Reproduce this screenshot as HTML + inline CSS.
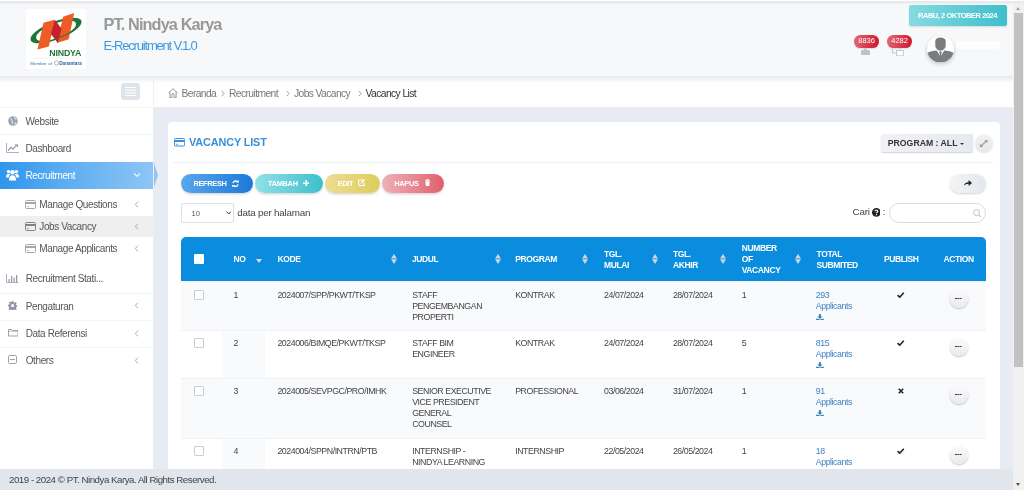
<!DOCTYPE html>
<html><head><meta charset="utf-8">
<style>
*{margin:0;padding:0;box-sizing:border-box}
html,body{width:1024px;height:490px;overflow:hidden}
body{position:relative;background:#e8ebf3;font-family:"Liberation Sans",sans-serif;color:#555}
.a{position:absolute}
.t{position:absolute;white-space:nowrap;line-height:1}
/* top */
#topline{left:0;top:0;width:1024px;z-index:5;height:4px;background:linear-gradient(#fff 0,#fff 1px,#e6e7ea 1px,#eeeff1 4px)}
#header{left:0;top:4px;width:1013px;height:72px;background:#f7f8fa}
#logo{left:26px;top:9px;width:60px;height:60px;background:#fff}
#sidebar{left:0;top:77px;width:154px;height:392px;background:#fff;border-right:1px solid #eceef2}
#crumb{left:154px;top:77px;width:859px;height:30px;background:#fff}
#card{left:167.5px;top:121.5px;width:832px;height:360px;background:#fff;border-radius:4px 4px 0 0}
#footer{left:0;top:469px;width:1013px;height:21px;background:#e1e5ec}
#sb{left:1013px;top:0;width:11px;height:490px;background:#f1f1f1}
#thumb{left:1014.2px;top:13.2px;width:8.8px;height:353.8px;background:#c1c1c1}
.sep{position:absolute;left:0;width:153px;height:1px;background:#f2f3f5}
.menu{font-size:10px;letter-spacing:-0.39px;color:#555}
.btn{position:absolute;height:19px;border-radius:10px;box-shadow:0 1.5px 2px rgba(0,0,0,.15);color:#fff;font-weight:bold;font-size:7.4px;letter-spacing:-0.3px}
.btn span{position:absolute;top:6px;white-space:nowrap;line-height:1}
#thead{left:181px;top:237px;width:805px;height:43.5px;background:#0a8ddf;border-radius:5px 5px 0 0}
.th{position:absolute;color:#fff;font-weight:bold;font-size:8.5px;letter-spacing:-0.38px;line-height:11.2px;white-space:nowrap}
.td{position:absolute;color:#444;font-size:8.8px;letter-spacing:-0.45px;line-height:11.2px;white-space:nowrap}
.row{position:absolute;left:181px;width:805px}
.cb{position:absolute;left:194px;width:10px;height:10px;border:1px solid #c9ccd1;background:#fff;border-radius:1px}
.sort{position:absolute;width:6px;height:10px}
.sort:before{content:"";position:absolute;left:0;top:0;border-left:2.9px solid transparent;border-right:2.9px solid transparent;border-bottom:4.3px solid #c9d3de}
.sort:after{content:"";position:absolute;left:0;top:5.3px;border-left:2.9px solid transparent;border-right:2.9px solid transparent;border-top:4.3px solid #c9d3de}
.act{position:absolute;left:949.5px;width:18.5px;height:18.5px;border-radius:50%;background:linear-gradient(#fbfbfc,#e9eaec);box-shadow:0 1px 2px rgba(0,0,0,.25)}
.act:after{content:"";position:absolute;left:5.8px;top:8.3px;width:1.7px;height:1.7px;background:#444;box-shadow:2.3px 0 0 #444,4.6px 0 0 #444}
.crumbt{font-size:10.3px;color:#777;letter-spacing:-0.6px}
.lnk{color:#3a78b8}
.chk{position:absolute;left:897px;width:8px;height:6px}
#root{position:absolute;left:0;top:0;width:1024px;height:490px;will-change:transform;overflow:hidden}
</style></head><body><div id="root">
<div class="a" id="topline"></div>
<div class="a" id="header"></div>
<div class="a" id="logo"></div>
<svg class="a" style="left:26px;top:9px" width="60" height="60" viewBox="0 0 60 60">
 <g transform="rotate(-21 30 21.5)">
  <path fill-rule="evenodd" fill="#1d7536" d="M2.8 21.5a27.2 8.9 0 1 0 54.4 0a27.2 8.9 0 1 0 -54.4 0z M8.8 21.8a21.2 7.3 0 1 0 42.4 0a21.2 7.3 0 1 0 -42.4 0z"/>
 </g>
 <path fill="#ee5b24" d="M11.5 40.4L17.5 13.8 28.8 10.8 22.8 37.4z"/>
 <path fill="#ee5b24" d="M30.8 34L37.2 7.8 48.2 3.9 42.7 30.3z"/>
 <path fill="#c8202e" d="M28.8 10.8L35.6 19.8 31.8 34 24.9 25z"/>
 <g transform="rotate(-21 30 21.5)">
  <path fill="none" stroke="#1d7536" stroke-width="0.9" d="M24 29 A23.5 6.9 0 0 0 47 27.4"/>
 </g>
 <text x="23.3" y="46.7" font-family="Liberation Sans" font-weight="bold" font-size="8.8" fill="#1d7536" letter-spacing="-0.18">NINDYA</text>
 <path d="M7 49.2h47" stroke="#e3e6ea" stroke-width=".5"/>
 <text x="4.2" y="55.6" font-family="Liberation Sans" font-size="4.4" fill="#3d6fb6" letter-spacing="0.1">Member of</text>
 <circle cx="30.5" cy="54" r="2.1" fill="none" stroke="#999" stroke-width=".7"/>
 <text x="33.3" y="55.6" font-family="Liberation Sans" font-size="4.6" fill="#2d5ea8" font-weight="bold" letter-spacing="0">Danantara</text>
</svg>
<div class="t" style="left:103.5px;top:15.5px;font-size:16.3px;font-weight:bold;color:#999;letter-spacing:-0.88px">PT. Nindya Karya</div>
<div class="t" style="left:103.5px;top:38.5px;font-size:13px;color:#3b99e0;letter-spacing:-1.2px">E-Recruitment V.1.0</div>


<!-- badges -->
<div class="a" style="left:853.9px;top:35.1px;width:25px;height:12.7px;border-radius:6.4px;background:linear-gradient(100deg,#e26a78,#d0142a);box-shadow:0 1px 1.5px rgba(0,0,0,.12)"></div>
<div class="t" style="left:858.3px;top:37.2px;font-size:7.5px;color:#fff;letter-spacing:-0.05px">8836</div>
<svg class="a" style="left:860.5px;top:47.6px" width="9" height="7.4" viewBox="0 0 9 7.4"><path d="M3 0h3v2H3z" fill="#c5ccd3"/><path d="M1.6 1.9h5.8c.9 0 1.6.8 1.6 1.8v2.4c0 .8-.5 1.3-1.2 1.3H1.2C.5 7.4 0 6.9 0 6.1V3.7c0-1 .7-1.8 1.6-1.8z" fill="#b9c1c9"/></svg>
<div class="a" style="left:887.1px;top:35.1px;width:25px;height:12.7px;border-radius:6.4px;background:linear-gradient(100deg,#e26a78,#d0142a);box-shadow:0 1px 1.5px rgba(0,0,0,.12)"></div>
<div class="t" style="left:891.3px;top:37.2px;font-size:7.5px;color:#fff;letter-spacing:-0.05px">4282</div>
<svg class="a" style="left:891.9px;top:47.6px" width="12" height="8.4" viewBox="0 0 12 8.4"><path d="M.5 .4v4.6h4M8 .4v2.2" stroke="#bcc3ca" stroke-width=".9" fill="none"/><rect x="4.5" y="2.6" width="6.8" height="5.3" fill="#fff" stroke="#bcc3ca" stroke-width=".9"/></svg>
<!-- avatar -->
<div class="a" style="left:927px;top:35.7px;width:27px;height:26.5px;border-radius:50%;background:#fff;box-shadow:0 2px 4px rgba(0,0,0,.22)"></div>
<svg class="a" style="left:927px;top:35.7px" width="27" height="26.5" viewBox="0 0 27 26.5">
 <defs><clipPath id="avc"><ellipse cx="13.5" cy="13.25" rx="13.5" ry="13.25"/></clipPath></defs>
 <g clip-path="url(#avc)" fill="#7b7c7e">
  <path d="M8.3 5.2C8.3 2.6 10.4 1.4 13.5 1.4s5.2 1.2 5.2 3.8v4.4c0 2.6-2.3 5.2-5.2 5.2S8.3 12.2 8.3 9.6z"/>
  <path d="M0 17.2C2.5 15.7 6.3 14.9 9.8 14.6l3.7 6.2 3.7-6.2c3.5.3 7.3 1.1 9.8 2.6V27H0z"/>
  <path d="M12.9 15.2h1.2l.5 1.1-.6 4.5-.5.8-.5-.8-.6-4.5z"/>
 </g>
</svg>
<div class="a" style="left:956.2px;top:41px;width:45px;height:7.8px;border-radius:4px;background:#fdfdfe"></div>

<!-- date badge -->
<div class="a" style="left:908.5px;top:5px;width:98.5px;height:21.2px;background:linear-gradient(90deg,#86dbe1,#3dbfcb);border-radius:2px;box-shadow:0 1px 2px rgba(0,0,0,.12)"></div>
<div class="t" style="left:918px;top:11.7px;font-size:7.5px;font-weight:bold;color:#fff;letter-spacing:-0.46px">RABU, 2 OKTOBER 2024</div>

<div class="a" id="sidebar"></div>
<div class="a" id="crumb"></div>

<!-- sidebar -->
<div class="a" style="left:121px;top:82.6px;width:19px;height:17.8px;background:#dfe3ea;border-radius:3px"></div>
<div class="a" style="left:125px;top:86.9px;width:11px;height:1.1px;background:#fff;box-shadow:0 2.7px 0 #fff,0 5.4px 0 #fff,0 8.1px 0 #fff"></div>
<div class="a" style="left:153px;top:77px;width:1px;height:30px;background:#eef0f3"></div>
<div class="sep" style="top:106.5px"></div>
<div class="sep" style="top:134px"></div>
<div class="sep" style="top:161.5px"></div>
<div class="sep" style="top:292.5px"></div>
<div class="sep" style="top:319.8px"></div>
<div class="sep" style="top:347.2px"></div>
<svg class="a" style="left:7.5px;top:115.5px" width="10" height="10" viewBox="0 0 10 10"><circle cx="5" cy="5" r="4.8" fill="#9ba5b1"/><path d="M2.2 2.3c1 .3 1.6 1 1.4 2 .8.3 1.1 1 .8 1.8-.4.6-.2 1.4.3 1.9M6.5 1c-.2.8.2 1.3.9 1.5.5.2.9.7.8 1.3M8.2 6.5c-.7 0-1.2.5-1.2 1.2v1" stroke="#fff" stroke-width=".9" fill="none"/></svg>
<div class="t menu" style="left:25.5px;top:116.6px">Website</div>
<svg class="a" style="left:6px;top:143px" width="13" height="10" viewBox="0 0 13 10"><path d="M.5 0v9.5H13" stroke="#aab2bd" stroke-width="1" fill="none"/><path d="M2 7.5l3-3.2 2 1.8 3.6-4" stroke="#8f98a4" stroke-width="1.1" fill="none"/><path d="M9 1.8h2.5v2.4" stroke="#8f98a4" stroke-width="1" fill="none"/></svg>
<div class="t menu" style="left:25.5px;top:143.9px">Dashboard</div>
<div class="a" style="left:0;top:162px;width:153px;height:26.5px;background:linear-gradient(90deg,#2f95ee,#5aacf0 40%,#8ec5f6)"></div>
<div class="a" style="left:153.6px;top:162.8px;width:0;height:0;border-top:12.2px solid transparent;border-bottom:12.2px solid transparent;border-left:4.8px solid #90c6f6"></div>
<svg class="a" style="left:6px;top:168.5px" width="13" height="12" viewBox="0 0 13 12"><g fill="#fff"><circle cx="6.5" cy="3.2" r="2.3"/><circle cx="2.5" cy="2.6" r="1.7"/><circle cx="10.5" cy="2.6" r="1.7"/><path d="M3 11.5c0-3.5 1.2-5.2 3.5-5.2S10 8 10 11.5z"/><path d="M0 8.5c0-2.5.8-3.7 2.5-3.7 1 0 1.4.3 1.6.6C3.2 6.3 2.8 7.3 2.7 8.5z"/><path d="M13 8.5c0-2.5-.8-3.7-2.5-3.7-1 0-1.4.3-1.6.6.9.9 1.3 1.9 1.4 3.1z"/></g></svg>
<div class="t menu" style="left:25.5px;top:170.9px;color:#fff">Recruitment</div>
<svg class="a" style="left:132.5px;top:172px" width="8" height="6" viewBox="0 0 8 6"><path d="M1 1.3l3 3 3-3" stroke="#fff" stroke-width="1.1" fill="none"/></svg>
<div class="a" style="left:0;top:215.5px;width:153px;height:21.3px;background:#efefef"></div>
<svg class="a" style="left:25px;top:200px" width="11" height="9" viewBox="0 0 11 9"><rect x=".5" y=".5" width="10" height="8" rx="1" fill="none" stroke="#a2a8af" stroke-width="1"/><rect x=".5" y="2" width="10" height="2" fill="#a2a8af"/><rect x="2" y="6.3" width="2" height=".8" fill="#a2a8af"/></svg><div class="t menu" style="left:39.3px;top:200.0px">Manage Questions</div><svg class="a" style="left:134px;top:200.5px" width="5" height="7" viewBox="0 0 5 7"><path d="M4 .7L1.2 3.5 4 6.3" stroke="#9aa0a7" stroke-width=".9" fill="none"/></svg><svg class="a" style="left:25px;top:221.8px" width="11" height="9" viewBox="0 0 11 9"><rect x=".5" y=".5" width="10" height="8" rx="1" fill="none" stroke="#7d848c" stroke-width="1"/><rect x=".5" y="2" width="10" height="2" fill="#7d848c"/><rect x="2" y="6.3" width="2" height=".8" fill="#7d848c"/></svg><div class="t menu" style="left:39.3px;top:222.2px">Jobs Vacancy</div><svg class="a" style="left:134px;top:222.5px" width="5" height="7" viewBox="0 0 5 7"><path d="M4 .7L1.2 3.5 4 6.3" stroke="#9aa0a7" stroke-width=".9" fill="none"/></svg><svg class="a" style="left:25px;top:244px" width="11" height="9" viewBox="0 0 11 9"><rect x=".5" y=".5" width="10" height="8" rx="1" fill="none" stroke="#a2a8af" stroke-width="1"/><rect x=".5" y="2" width="10" height="2" fill="#a2a8af"/><rect x="2" y="6.3" width="2" height=".8" fill="#a2a8af"/></svg><div class="t menu" style="left:39.3px;top:244.2px">Manage Applicants</div><svg class="a" style="left:134px;top:244.5px" width="5" height="7" viewBox="0 0 5 7"><path d="M4 .7L1.2 3.5 4 6.3" stroke="#9aa0a7" stroke-width=".9" fill="none"/></svg>
<svg class="a" style="left:6px;top:274px" width="12.5" height="9" viewBox="0 0 12.5 9"><path d="M.5 0v8.5h12" stroke="#aab2bd" stroke-width="1" fill="none"/><g fill="#8f98a4"><rect x="2.5" y="5" width="1.2" height="3"/><rect x="5" y="2" width="1.2" height="6"/><rect x="7.5" y="3.5" width="1.2" height="4.5"/><rect x="10" y="1" width="1.2" height="7"/></g></svg>
<div class="t menu" style="left:25.7px;top:274.3px">Recruitment Stati...</div>
<svg class="a" style="left:8px;top:301.2px" width="9.2" height="9.2" viewBox="0 0 10 10"><path fill="#8f98a4" d="M4.2 0h1.6l.3 1.5 1 .5 1.3-.9 1.1 1.1-.9 1.3.5 1 1.4.3v1.6l-1.4.3-.5 1 .9 1.3-1.1 1.1-1.3-.9-1 .5-.3 1.5H4.2l-.3-1.5-1-.5-1.3.9L.5 8.3l.9-1.3-.5-1L0 5.8V4.2l1.4-.3.5-1-.9-1.3L2.1.5l1.3.9 1-.5z"/><circle cx="5" cy="5" r="1.7" fill="#fff"/></svg>
<div class="t menu" style="left:25.7px;top:301.7px">Pengaturan</div>
<svg class="a" style="left:7.5px;top:329px" width="10.5" height="7.5" viewBox="0 0 10.5 7.5"><path d="M.5 .5h3.3l1 1.1h5.2v5.4H.5z" fill="none" stroke="#8f98a4" stroke-width=".9"/><path d="M.5 2.2h9.5" stroke="#8f98a4" stroke-width=".6"/></svg>
<div class="t menu" style="left:25.7px;top:328.9px">Data Referensi</div>
<svg class="a" style="left:8px;top:355px" width="9" height="9" viewBox="0 0 9 9"><rect x=".5" y=".5" width="8" height="8" rx="1.3" fill="none" stroke="#8f98a4" stroke-width=".9"/><path d="M2 4.5h5" stroke="#8f98a4" stroke-width=".9"/></svg>
<div class="t menu" style="left:25.7px;top:355.9px">Others</div>
<svg class="a" style="left:134px;top:302px" width="5" height="7" viewBox="0 0 5 7"><path d="M4 .7L1.2 3.5 4 6.3" stroke="#9aa0a7" stroke-width=".9" fill="none"/></svg><svg class="a" style="left:134px;top:329.5px" width="5" height="7" viewBox="0 0 5 7"><path d="M4 .7L1.2 3.5 4 6.3" stroke="#9aa0a7" stroke-width=".9" fill="none"/></svg><svg class="a" style="left:134px;top:356.5px" width="5" height="7" viewBox="0 0 5 7"><path d="M4 .7L1.2 3.5 4 6.3" stroke="#9aa0a7" stroke-width=".9" fill="none"/></svg>
<div class="a" id="card"></div>

<div class="a" style="left:0;top:76px;width:1013px;height:7px;background:linear-gradient(#e7e8ea,#ededef 25%,#f6f6f7 60%,rgba(255,255,255,0))"></div>
<!-- breadcrumb -->
<svg class="a" style="left:168px;top:87.6px" width="10" height="10.4" viewBox="0 0 10 10.4"><path d="M.6 5L5 .7 9.4 5M1.9 3.8v6h2V6.6a1.1 1.1 0 0 1 2.2 0v3.2h2V3.8" fill="none" stroke="#80858b" stroke-width=".85" stroke-linejoin="round"/></svg>
<div class="t crumbt" style="left:181.5px;top:88.8px">Beranda</div>
<svg class="a" style="left:221px;top:90.3px" width="4" height="7" viewBox="0 0 4 7"><path d="M.7.8l2.5 2.7L.7 6.2" stroke="#888" stroke-width=".8" fill="none"/></svg>
<div class="t crumbt" style="left:229px;top:88.8px">Recruitment</div>
<svg class="a" style="left:286px;top:90.3px" width="4" height="7" viewBox="0 0 4 7"><path d="M.7.8l2.5 2.7L.7 6.2" stroke="#888" stroke-width=".8" fill="none"/></svg>
<div class="t crumbt" style="left:294px;top:88.8px">Jobs Vacancy</div>
<svg class="a" style="left:358px;top:90.3px" width="4" height="7" viewBox="0 0 4 7"><path d="M.7.8l2.5 2.7L.7 6.2" stroke="#888" stroke-width=".8" fill="none"/></svg>
<div class="t crumbt" style="left:365.6px;top:88.8px;color:#333">Vacancy List</div>

<!-- card header -->
<svg class="a" style="left:174px;top:138.2px" width="11.2" height="8.5" viewBox="0 0 11.2 8.5"><rect x=".5" y=".5" width="10.2" height="7.5" rx="1" fill="none" stroke="#3a8fd9" stroke-width="1"/><rect x=".5" y="2" width="10.2" height="2" fill="#3a8fd9"/><rect x="2" y="5.8" width="2.2" height=".8" fill="#3a8fd9"/></svg>
<div class="t" style="left:189px;top:136.9px;font-size:10.9px;font-weight:bold;color:#3a8fd9;letter-spacing:-0.15px">VACANCY LIST</div>
<div class="a" style="left:880.5px;top:133.7px;width:92px;height:18.5px;border-radius:2px;background:linear-gradient(90deg,#eff1f4,#e6e9ee);box-shadow:0 1px 1.5px rgba(0,0,0,.18)"></div>
<div class="t" style="left:887.8px;top:138.5px;font-size:8.7px;font-weight:bold;color:#333;letter-spacing:0">PROGRAM : ALL</div>
<div class="a" style="left:960px;top:143px;width:0;height:0;border-left:2.6px solid transparent;border-right:2.6px solid transparent;border-top:2.6px solid #333"></div>
<div class="a" style="left:974.5px;top:133.7px;width:18.5px;height:18.5px;border-radius:50%;background:linear-gradient(#f1f2f4,#e6e8eb);box-shadow:0 1px 1.5px rgba(0,0,0,.15)"></div>
<svg class="a" style="left:979px;top:138.5px" width="9.5" height="9" viewBox="0 0 9.5 9"><path d="M1.5 7.5l6.5-6" stroke="#9a9ea4" stroke-width="1.1"/><path d="M5.2 1h3.3v3.1z M.9 4.8v3.3h3.4z" fill="#9a9ea4"/></svg>
<div class="a" style="left:173px;top:161.5px;width:820px;height:1px;background:#f0f1f4"></div>

<!-- buttons -->
<div class="btn" style="left:181px;top:174px;width:72px;background:linear-gradient(90deg,#5aa7ec,#1c78d8)"><span style="left:12.4px">REFRESH</span></div>
<svg class="a" style="left:232px;top:179.5px" width="7" height="7.5" viewBox="0 0 7 7.5"><path d="M1 3.2A2.6 2.6 0 0 1 5.6 2M6 4.3A2.6 2.6 0 0 1 1.4 5.5" stroke="#fff" stroke-width="1.3" fill="none"/><path d="M4.2 2.6h2.6V0zM2.8 4.9H.2v2.6z" fill="#fff"/></svg>
<div class="btn" style="left:255px;top:174px;width:67.5px;background:linear-gradient(90deg,#92e0e7,#3dbfcb)"><span style="left:13px">TAMBAH</span></div>
<svg class="a" style="left:302.8px;top:179.5px" width="6.5" height="6.5" viewBox="0 0 6.5 6.5"><path d="M3.25 0v6.5M0 3.25h6.5" stroke="#fff" stroke-width="1.6"/></svg>
<div class="btn" style="left:325px;top:174px;width:54.5px;background:linear-gradient(90deg,#eddd92,#dccd5c)"><span style="left:12.5px">EDIT</span></div>
<svg class="a" style="left:358px;top:179.3px" width="7.5" height="7" viewBox="0 0 7.5 7"><path d="M5 1H.7v5.5h5.5V3.8" stroke="#fff" stroke-width="1" fill="none"/><path d="M2.7 4.6l.3-1.3L6.2.1l1 1L4 4.3z" fill="#fff"/></svg>
<div class="btn" style="left:382px;top:174px;width:62px;background:linear-gradient(90deg,#eeb1b7,#e0606d)"><span style="left:12.3px">HAPUS</span></div>
<svg class="a" style="left:424.7px;top:179.3px" width="5.2" height="7" viewBox="0 0 5.2 7"><path d="M0 .9h5.2v.9H0zM1.6 0h2v1H1.6zM.5 2.2h4.2l-.3 4.8H.8z" fill="#fff"/></svg>

<div class="a" style="left:950.2px;top:174px;width:36.2px;height:19.2px;border-radius:10px;background:linear-gradient(90deg,#f3f4f6,#e4e7ec);box-shadow:0 1px 2px rgba(0,0,0,.18)"></div>
<svg class="a" style="left:964.4px;top:180.3px" width="8" height="6" viewBox="0 0 8 6"><path d="M0 6C.2 3.5 1.8 2.3 4.6 2.3V0L8 3 4.6 6V3.8C2.4 3.8 1 4.5 0 6z" fill="#222"/></svg>

<!-- length + search -->
<div class="a" style="left:181.3px;top:203.1px;width:53px;height:20px;border:1px solid #dcdfe5;border-radius:2px;background:#fff"></div>
<div class="t" style="left:191.6px;top:209.5px;font-size:7.6px;color:#555">10</div>
<svg class="a" style="left:225.5px;top:211.3px" width="5.6" height="4" viewBox="0 0 5.6 4"><path d="M.6.6l2.2 2.4L5 .6" stroke="#333" stroke-width="1" fill="none"/></svg>
<div class="t" style="left:237.2px;top:207.8px;font-size:9.8px;color:#444;letter-spacing:-0.2px">data per halaman</div>
<div class="t" style="left:852.6px;top:207.3px;font-size:9.8px;color:#444;letter-spacing:-0.2px">Cari</div>
<svg class="a" style="left:871.7px;top:207.8px" width="8.8" height="8.8" viewBox="0 0 10 10"><circle cx="5" cy="5" r="5" fill="#222"/><path d="M3.4 3.8C3.4 2.8 4.1 2.3 5 2.3S6.6 2.9 6.6 3.7C6.6 4.8 5.1 4.9 5.1 6" stroke="#fff" stroke-width="1.3" fill="none"/><circle cx="5.1" cy="7.6" r=".75" fill="#fff"/></svg>
<div class="t" style="left:882.8px;top:207.3px;font-size:9.8px;color:#444">:</div>
<div class="a" style="left:889px;top:202.9px;width:97px;height:20.5px;border:1px solid #d6dce5;border-radius:10.25px;background:#fff"></div>
<svg class="a" style="left:973px;top:208.5px" width="8.5" height="8.5" viewBox="0 0 8.5 8.5"><circle cx="3.6" cy="3.6" r="3" fill="none" stroke="#b5bac1" stroke-width=".9"/><path d="M5.8 5.8L8 8" stroke="#b5bac1" stroke-width="1"/></svg>

<!-- table -->
<div class="a" id="thead"></div>
<div class="a" style="left:194.3px;top:254.2px;width:10px;height:10px;background:#fff;border-radius:1px"></div>
<div class="th" style="left:233.4px;top:254.35px">NO</div>
<div class="th" style="left:277.6px;top:254.35px">KODE</div>
<div class="th" style="left:412px;top:254.35px">JUDUL</div>
<div class="th" style="left:515.2px;top:254.35px">PROGRAM</div>
<div class="th" style="left:604px;top:248.65px">TGL.<br>MULAI</div>
<div class="th" style="left:672.9px;top:248.65px">TGL.<br>AKHIR</div>
<div class="th" style="left:741.7px;top:242.85px">NUMBER<br>OF<br>VACANCY</div>
<div class="th" style="left:816.5px;top:248.65px">TOTAL<br>SUBMITED</div>
<div class="th" style="left:883.9px;top:254.35px">PUBLISH</div>
<div class="th" style="left:943.4px;top:254.35px">ACTION</div>
<div class="a" style="left:256.3px;top:259.3px;width:0;height:0;border-left:3px solid transparent;border-right:3px solid transparent;border-top:4.5px solid #d5dfe9"></div>
<svg class="a" style="left:391px;top:254.2px" width="6" height="10" viewBox="0 0 6 10"><path d="M0 4.6L3 0 6 4.6zM0 5.3h6L3 9.9z" fill="#cbd5df"/></svg>
<svg class="a" style="left:495.4px;top:254.2px" width="6" height="10" viewBox="0 0 6 10"><path d="M0 4.6L3 0 6 4.6zM0 5.3h6L3 9.9z" fill="#cbd5df"/></svg>
<svg class="a" style="left:582px;top:254.2px" width="6" height="10" viewBox="0 0 6 10"><path d="M0 4.6L3 0 6 4.6zM0 5.3h6L3 9.9z" fill="#cbd5df"/></svg>
<svg class="a" style="left:651.5px;top:254.2px" width="6" height="10" viewBox="0 0 6 10"><path d="M0 4.6L3 0 6 4.6zM0 5.3h6L3 9.9z" fill="#cbd5df"/></svg>
<svg class="a" style="left:720.3px;top:254.2px" width="6" height="10" viewBox="0 0 6 10"><path d="M0 4.6L3 0 6 4.6zM0 5.3h6L3 9.9z" fill="#cbd5df"/></svg>
<svg class="a" style="left:794.5px;top:254.2px" width="6" height="10" viewBox="0 0 6 10"><path d="M0 4.6L3 0 6 4.6zM0 5.3h6L3 9.9z" fill="#cbd5df"/></svg>
<div class="row" style="top:281px;height:49px;background:#f9fafc"></div>
<div class="a" style="left:181px;top:280.5px;width:805px;height:1px;background:#eef1f5"></div>
<div class="cb" style="top:290.3px"></div>
<div class="td" style="left:233.6px;top:289.65px">1</div>
<div class="td" style="left:277.4px;top:289.65px">2024007/SPP/PKWT/TKSP</div>
<div class="td" style="left:412.2px;top:289.65px">STAFF<br>PENGEMBANGAN<br>PROPERTI</div>
<div class="td" style="left:515.2px;top:289.65px">KONTRAK</div>
<div class="td" style="left:604px;top:289.65px">24/07/2024</div>
<div class="td" style="left:672.9px;top:289.65px">28/07/2024</div>
<div class="td" style="left:741.7px;top:289.65px">1</div>
<div class="td" style="left:815.8px;top:289.65px;color:#4083c4">293<br>Applicants</div>
<svg class="a" style="left:815.8px;top:313.5px" width="7.8" height="6.6" viewBox="0 0 7.8 6.6"><path d="M2.9 0h2v2.6h1.6L3.9 5 1.3 2.6h1.6z" fill="#3d7fc0"/><path d="M0 4.8h2.2l1.7 1 1.7-1h2.2v1.8H0z" fill="#3d7fc0"/></svg>
<svg class="a" style="left:897.4px;top:292.0px" width="7.4" height="6" viewBox="0 0 7.4 6"><path d="M.6 3.2l2.1 2 4.1-4.5" stroke="#222" stroke-width="1.6" fill="none"/></svg>
<div class="act" style="top:289.5px"></div>
<div class="row" style="top:330px;height:48px;background:#fff"></div>
<div class="a" style="left:221.5px;top:330px;width:43.7px;height:48px;background:#f9fafc"></div>
<div class="a" style="left:181px;top:329.5px;width:805px;height:1px;background:#eef1f5"></div>
<div class="cb" style="top:338.3px"></div>
<div class="td" style="left:233.6px;top:337.65px">2</div>
<div class="td" style="left:277.4px;top:337.65px">2024006/BIMQE/PKWT/TKSP</div>
<div class="td" style="left:412.2px;top:337.65px">STAFF BIM<br>ENGINEER</div>
<div class="td" style="left:515.2px;top:337.65px">KONTRAK</div>
<div class="td" style="left:604px;top:337.65px">24/07/2024</div>
<div class="td" style="left:672.9px;top:337.65px">28/07/2024</div>
<div class="td" style="left:741.7px;top:337.65px">5</div>
<div class="td" style="left:815.8px;top:337.65px;color:#4083c4">815<br>Applicants</div>
<svg class="a" style="left:815.8px;top:361.5px" width="7.8" height="6.6" viewBox="0 0 7.8 6.6"><path d="M2.9 0h2v2.6h1.6L3.9 5 1.3 2.6h1.6z" fill="#3d7fc0"/><path d="M0 4.8h2.2l1.7 1 1.7-1h2.2v1.8H0z" fill="#3d7fc0"/></svg>
<svg class="a" style="left:897.4px;top:340.0px" width="7.4" height="6" viewBox="0 0 7.4 6"><path d="M.6 3.2l2.1 2 4.1-4.5" stroke="#222" stroke-width="1.6" fill="none"/></svg>
<div class="act" style="top:337.5px"></div>
<div class="row" style="top:378px;height:60px;background:#f9fafc"></div>
<div class="a" style="left:181px;top:377.5px;width:805px;height:1px;background:#eef1f5"></div>
<div class="cb" style="top:386.3px"></div>
<div class="td" style="left:233.6px;top:385.65px">3</div>
<div class="td" style="left:277.4px;top:385.65px">2024005/SEVPGC/PRO/IMHK</div>
<div class="td" style="left:412.2px;top:385.65px">SENIOR EXECUTIVE<br>VICE PRESIDENT<br>GENERAL<br>COUNSEL</div>
<div class="td" style="left:515.2px;top:385.65px">PROFESSIONAL</div>
<div class="td" style="left:604px;top:385.65px">03/06/2024</div>
<div class="td" style="left:672.9px;top:385.65px">31/07/2024</div>
<div class="td" style="left:741.7px;top:385.65px">1</div>
<div class="td" style="left:815.8px;top:385.65px;color:#4083c4">91<br>Applicants</div>
<svg class="a" style="left:815.8px;top:409.5px" width="7.8" height="6.6" viewBox="0 0 7.8 6.6"><path d="M2.9 0h2v2.6h1.6L3.9 5 1.3 2.6h1.6z" fill="#3d7fc0"/><path d="M0 4.8h2.2l1.7 1 1.7-1h2.2v1.8H0z" fill="#3d7fc0"/></svg>
<svg class="a" style="left:898px;top:388.0px" width="6" height="6" viewBox="0 0 6 6"><path d="M.8.8l4.4 4.4M5.2.8L.8 5.2" stroke="#222" stroke-width="1.6" fill="none"/></svg>
<div class="act" style="top:385.5px"></div>
<div class="row" style="top:438px;height:52px;background:#fff"></div>
<div class="a" style="left:221.5px;top:438px;width:43.7px;height:52px;background:#f9fafc"></div>
<div class="a" style="left:181px;top:437.5px;width:805px;height:1px;background:#eef1f5"></div>
<div class="cb" style="top:446.3px"></div>
<div class="td" style="left:233.6px;top:445.65px">4</div>
<div class="td" style="left:277.4px;top:445.65px">2024004/SPPN/INTRN/PTB</div>
<div class="td" style="left:412.2px;top:445.65px">INTERNSHIP -<br>NINDYA LEARNING</div>
<div class="td" style="left:515.2px;top:445.65px">INTERNSHIP</div>
<div class="td" style="left:604px;top:445.65px">22/05/2024</div>
<div class="td" style="left:672.9px;top:445.65px">26/05/2024</div>
<div class="td" style="left:741.7px;top:445.65px">1</div>
<div class="td" style="left:815.8px;top:445.65px;color:#4083c4">18<br>Applicants</div>
<svg class="a" style="left:815.8px;top:469.5px" width="7.8" height="6.6" viewBox="0 0 7.8 6.6"><path d="M2.9 0h2v2.6h1.6L3.9 5 1.3 2.6h1.6z" fill="#3d7fc0"/><path d="M0 4.8h2.2l1.7 1 1.7-1h2.2v1.8H0z" fill="#3d7fc0"/></svg>
<svg class="a" style="left:897.4px;top:448.0px" width="7.4" height="6" viewBox="0 0 7.4 6"><path d="M.6 3.2l2.1 2 4.1-4.5" stroke="#222" stroke-width="1.6" fill="none"/></svg>
<div class="act" style="top:445.5px"></div>
<div class="a" id="footer"></div>
<div class="t" style="left:9px;top:474.7px;font-size:9.7px;color:#444;letter-spacing:-0.47px">2019 - 2024 © PT. Nindya Karya. All Rights Reserved.</div>

<div class="a" id="sb"></div>
<div class="a" id="thumb"></div>
<div class="a" style="left:1016.2px;top:6.8px;width:0;height:0;border-left:2.5px solid transparent;border-right:2.5px solid transparent;border-bottom:3px solid #a3a3a3"></div>
<div class="a" style="left:1016.2px;top:482.8px;width:0;height:0;border-left:2.5px solid transparent;border-right:2.5px solid transparent;border-top:3px solid #505050"></div>

</div></body></html>
